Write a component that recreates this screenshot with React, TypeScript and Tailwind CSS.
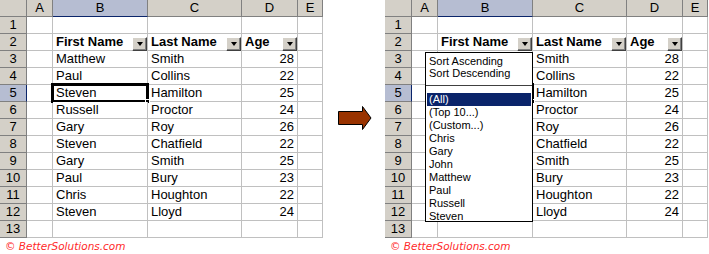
const people = [
  ['Matthew', 'Smith', 28],
  ['Paul', 'Collins', 22],
  ['Steven', 'Hamilton', 25],
  ['Russell', 'Proctor', 24],
  ['Gary', 'Roy', 26],
  ['Steven', 'Chatfield', 22],
  ['Gary', 'Smith', 25],
  ['Paul', 'Bury', 23],
  ['Chris', 'Houghton', 22],
  ['Steven', 'Lloyd', 24],
] as const

const cell = 'h-[17px] shrink-0 border-r border-b border-[#c0c0c0] bg-white text-[13px] leading-[16px] text-black'
const head = 'h-[17px] shrink-0 border-r border-b border-[#808080] bg-[#d4d0c8] text-[13px] leading-[16px] text-black text-center'

function FilterButton() {
  return (
    <span className="absolute right-0 top-[3px] flex h-[14px] w-[15px] items-center justify-center border border-t-white border-l-white border-r-[#404040] border-b-[#404040] bg-[#d4d0c8] shadow-[inset_-1px_-1px_0_#808080]">
      <span className="h-0 w-0 border-x-[3.5px] border-t-[4px] border-x-transparent border-t-black" />
    </span>
  )
}

function RowHead({ n }: { n: number }) {
  const sel = n === 5
  return (
    <div
      className={
        sel
          ? 'h-[17px] w-[27px] shrink-0 border-r border-b border-r-[#0a246a] border-b-[#808080] bg-[#b6bdd2] text-[13px] leading-[16px] text-center'
          : head + ' w-[27px]'
      }
    >
      {n}
    </div>
  )
}

function Sheet({ children, open }: { children?: React.ReactNode; open?: boolean }) {
  return (
    <div className="relative w-[323px]">
      <div className="flex">
        <div className={head + ' w-[27px]'} />
        <div className={head + ' w-[26px]'}>A</div>
        <div className="h-[17px] w-[95px] shrink-0 border-r border-b border-r-[#808080] border-b-[#0a246a] bg-[#b6bdd2] text-center text-[13px] leading-[16px]">
          B
        </div>
        <div className={head + ' w-[94px]'}>C</div>
        <div className={head + ' w-[56px]'}>D</div>
        <div className={head + ' w-[25px]'}>E</div>
      </div>
      <div className="flex">
        <RowHead n={1} />
        <div className={cell + ' w-[26px]'} />
        <div className={cell + ' w-[95px]'} />
        <div className={cell + ' w-[94px]'} />
        <div className={cell + ' w-[56px]'} />
        <div className={cell + ' w-[25px]'} />
      </div>
      <div className="flex">
        <RowHead n={2} />
        <div className={cell + ' w-[26px]'} />
        <div className={cell + ' relative w-[95px] pl-[3px] font-bold'}>
          First Name
          <FilterButton />
        </div>
        <div className={cell + ' relative w-[94px] pl-[3px] font-bold'}>
          Last Name
          <FilterButton />
        </div>
        <div className={cell + ' relative w-[56px] pl-[3px] font-bold'}>
          Age
          <FilterButton />
        </div>
        <div className={cell + ' w-[25px]'} />
      </div>
      {people.map(([first, last, age], i) => (
        <div key={i} className="flex">
          <RowHead n={i + 3} />
          <div className={cell + ' w-[26px]'} />
          <div className={cell + ' relative w-[95px] pl-[3px]'}>
            {/* names are covered by the open filter list */}
            {open ? null : first}
            {i === 2 && (
              <span className="absolute -left-[2px] -top-[2px] h-[20px] w-[98px] border-[3px] border-black">
                <span className="absolute -bottom-[4px] -right-[4px] h-[5px] w-[5px] border border-white bg-black" />
              </span>
            )}
          </div>
          <div className={cell + ' w-[94px] pl-[3px]'}>{last}</div>
          <div className={cell + ' w-[56px] pr-[3px] text-right'}>{age}</div>
          <div className={cell + ' w-[25px]'} />
        </div>
      ))}
      <div className="flex">
        <RowHead n={13} />
        <div className={cell + ' w-[26px]'} />
        <div className={cell + ' w-[95px]'} />
        <div className={cell + ' w-[94px]'} />
        <div className={cell + ' w-[56px]'} />
        <div className={cell + ' w-[25px]'} />
      </div>
      <p className="mt-[2px] pl-[5px] font-['DejaVu_Sans',sans-serif] text-[10.5px] italic leading-[13px] text-[#ff2a2a]">
        © BetterSolutions.com
      </p>
      {children}
    </div>
  )
}

function FilterList() {
  const names = ['(Top 10...)', '(Custom...)', 'Chris', 'Gary', 'John', 'Matthew', 'Paul', 'Russell', 'Steven']
  return (
    <div className="absolute left-[40px] top-[52px] h-[170px] w-[108px] border border-black bg-white font-['Liberation_Sans',Arial,sans-serif] text-[11px] leading-[12px] text-black">
      <div className="pl-[3px] pt-[2px]">Sort Ascending</div>
      <div className="pl-[3px]">Sort Descending</div>
      <div className="mt-[6px] border-t border-[#404040]" />
      <div className="mx-px mt-[7px] h-[13px] bg-[#0a246a] pl-[2px] leading-[13px] text-white">(All)</div>
      {names.map((n) => (
        <div key={n} className="h-[13px] pl-[3px] leading-[13px]">
          {n}
        </div>
      ))}
    </div>
  )
}

export default function App() {
  return (
    <div className="flex h-[254px] w-[709px] items-start bg-white font-['Liberation_Sans',Arial,sans-serif]">
      <Sheet />
      <div className="w-[62px] shrink-0 pl-[15px] pt-[106px]">
        <svg width="34" height="24" viewBox="0 0 34 24">
          <path d="M0.5 5.5 H24.5 V0.5 L33 12 L24.5 23.5 V18.5 H0.5 Z" fill="#993300" stroke="#000" strokeWidth="1" />
        </svg>
      </div>
      <Sheet open>
        <FilterList />
      </Sheet>
    </div>
  )
}
